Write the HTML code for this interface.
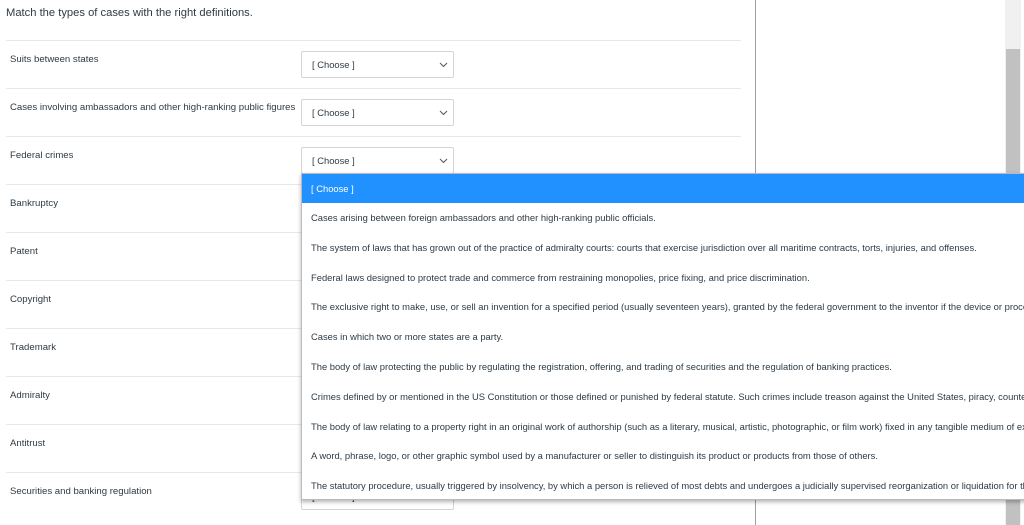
<!DOCTYPE html>
<html><head><meta charset="utf-8"><style>
*{margin:0;padding:0;box-sizing:border-box}
body{width:1024px;height:525px;overflow:hidden;background:#fff;font-family:"Liberation Sans",sans-serif;color:#2d3b45;position:relative}
.title{position:absolute;left:6px;top:7px;font-size:11.2px}
.sep{position:absolute;left:6px;width:735px;height:1px;background:#e8e8e8}
.lab{position:absolute;left:10px;font-size:9.6px}
.sel{position:absolute;left:301px;width:153px;height:27px;border:1px solid #d5d5d5;border-radius:2px;font-size:9.4px;padding:7px 0 0 10px;background:#fff}
.sel svg{position:absolute;right:5px;top:10px}
.vline{position:absolute;left:755px;top:0;width:1px;height:525px;background:#a0a0a0}
.track{position:absolute;left:1005px;top:0;width:16px;height:525px;background:#f0f0f0}
.thumb{position:absolute;left:1006px;top:49px;width:14px;height:476px;background:#c1c1c1}
.dd{position:absolute;left:301px;top:173px;width:740px;height:327px;background:#fff;border:1px solid #bbb;box-shadow:0 2px 4px rgba(0,0,0,.3);overflow:hidden}
.opt{height:29.8px;font-size:9.4px;padding-left:9px;line-height:29.8px;white-space:nowrap}
.opt.hi{background:#2191ff;color:#fff;height:29px;line-height:29px}
</style></head><body>
<div class="title">Match the types of cases with the right definitions.</div>
<div class="vline"></div>
<div class="track"></div><div class="thumb"></div>

<div class="sep" style="top:40px"></div>
<div class="sep" style="top:88px"></div>
<div class="sep" style="top:136px"></div>
<div class="sep" style="top:184px"></div>
<div class="sep" style="top:232px"></div>
<div class="sep" style="top:280px"></div>
<div class="sep" style="top:328px"></div>
<div class="sep" style="top:376px"></div>
<div class="sep" style="top:424px"></div>
<div class="sep" style="top:472px"></div>

<div class="lab" style="top:54px">Suits between states</div>
<div class="lab" style="top:102px">Cases involving ambassadors and other high-ranking public figures</div>
<div class="lab" style="top:150px">Federal crimes</div>
<div class="lab" style="top:198px">Bankruptcy</div>
<div class="lab" style="top:246px">Patent</div>
<div class="lab" style="top:294px">Copyright</div>
<div class="lab" style="top:342px">Trademark</div>
<div class="lab" style="top:390px">Admiralty</div>
<div class="lab" style="top:438px">Antitrust</div>
<div class="lab" style="top:486px">Securities and banking regulation</div>

<div class="sel" style="top:51px">[ Choose ]<svg width="9" height="6" viewBox="0 0 9 6"><path d="M1 1l3.5 3.5 3.5-3.5" stroke="#555" fill="none" stroke-width="1"/></svg></div>
<div class="sel" style="top:99px">[ Choose ]<svg width="9" height="6" viewBox="0 0 9 6"><path d="M1 1l3.5 3.5 3.5-3.5" stroke="#555" fill="none" stroke-width="1"/></svg></div>
<div class="sel" style="top:147px">[ Choose ]<svg width="9" height="6" viewBox="0 0 9 6"><path d="M1 1l3.5 3.5 3.5-3.5" stroke="#555" fill="none" stroke-width="1"/></svg></div>
<div class="sel" style="top:483px">[ Choose ]</div>

<div class="dd">
<div class="opt hi">[ Choose ]</div>
<div class="opt">Cases arising between foreign ambassadors and other high-ranking public officials.</div>
<div class="opt">The system of laws that has grown out of the practice of admiralty courts: courts that exercise jurisdiction over all maritime contracts, torts, injuries, and offenses.</div>
<div class="opt">Federal laws designed to protect trade and commerce from restraining monopolies, price fixing, and price discrimination.</div>
<div class="opt">The exclusive right to make, use, or sell an invention for a specified period (usually seventeen years), granted by the federal government to the inventor if the device or process is novel.</div>
<div class="opt">Cases in which two or more states are a party.</div>
<div class="opt">The body of law protecting the public by regulating the registration, offering, and trading of securities and the regulation of banking practices.</div>
<div class="opt">Crimes defined by or mentioned in the US Constitution or those defined or punished by federal statute. Such crimes include treason against the United States, piracy, counterfeiting.</div>
<div class="opt">The body of law relating to a property right in an original work of authorship (such as a literary, musical, artistic, photographic, or film work) fixed in any tangible medium of expression.</div>
<div class="opt">A word, phrase, logo, or other graphic symbol used by a manufacturer or seller to distinguish its product or products from those of others.</div>
<div class="opt">The statutory procedure, usually triggered by insolvency, by which a person is relieved of most debts and undergoes a judicially supervised reorganization or liquidation for the benefit of creditors.</div>
</div>
</body></html>
